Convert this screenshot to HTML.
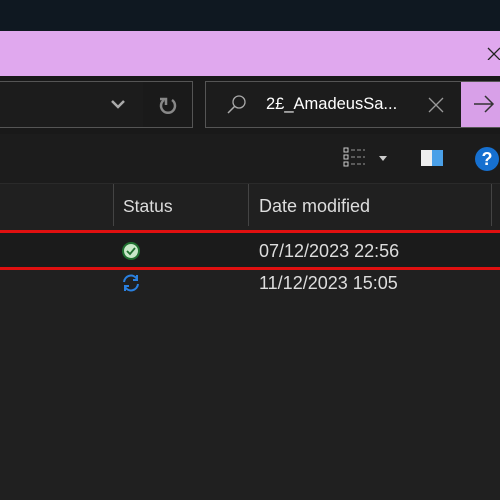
<!DOCTYPE html><html><head><style>
body{margin:0;width:500px;height:500px;background:#202020;position:relative;overflow:hidden;font-family:"Liberation Sans",sans-serif;color:#fff}
div{position:absolute;box-sizing:border-box}
</style></head><body>
<div style="left:0;top:0;width:500px;height:31px;background:#0f1821"></div>
<div style="left:0;top:31px;width:500px;height:45px;background:#e0a8ee"></div>
<svg style="position:absolute;left:486px;top:46px" width="14" height="14"><path d="M2 2L14 14M14 2L2 14" stroke="#222" stroke-width="1.3"/></svg>
<div style="left:0;top:76px;width:500px;height:58px;background:#191919"></div>
<div style="left:-2px;top:81px;width:195px;height:47px;border:1px solid #555;background:#1c1c1c"></div>
<div style="left:143px;top:82px;width:49px;height:45px;background:#1a1a1a"></div>
<svg style="position:absolute;left:110px;top:98px" width="16" height="12"><path d="M2 3L8 9L14 3" stroke="#aaa" stroke-width="2.5" fill="none"/></svg>
<svg style="position:absolute;left:158px;top:96px" width="20" height="20"><path d="M14 4A7 7 0 1 1 6 4" stroke="#888" stroke-width="2.5" fill="none"/><path d="M2 3L8 3L8 9" stroke="#888" stroke-width="2.5" fill="none"/></svg>
<div style="left:205px;top:81px;width:300px;height:47px;border:1px solid #555;background:#1c1c1c"></div>
<svg style="position:absolute;left:226px;top:94px" width="22" height="22"><circle cx="13" cy="8" r="6" stroke="#aaa" stroke-width="1.3" fill="none"/><path d="M9 12L2 19" stroke="#aaa" stroke-width="1.5"/></svg>
<div style="left:266px;top:95px;font-size:16.5px;color:#fff">2£_AmadeusSa...</div>
<svg style="position:absolute;left:428px;top:97px" width="16" height="16"><path d="M1 1L15 15M15 1L1 15" stroke="#999" stroke-width="1.3"/></svg>
<div style="left:461px;top:82px;width:39px;height:45px;background:#d8a0e8"></div>
<svg style="position:absolute;left:473px;top:95px" width="22" height="18"><path d="M1 9L20 9M12 1L20 9L12 17" stroke="#333" stroke-width="1.5" fill="none"/></svg>
<div style="left:0;top:134px;width:500px;height:49px;background:#1c1c1c"></div>
<svg style="position:absolute;left:343px;top:147px" width="45" height="22"><g fill="none" stroke="#ccc"><rect x="1" y="1" width="4" height="4"/><rect x="1" y="8" width="4" height="4"/><rect x="1" y="15" width="4" height="4"/></g><g stroke="#999"><path d="M8 3H22M8 10H22M8 17H22" stroke-dasharray="4 2"/></g><path d="M36 9L44 9L40 14Z" fill="#ccc"/></svg>
<div style="left:421px;top:150px;width:22px;height:16px;background:#eee"></div>
<div style="left:432px;top:150px;width:11px;height:16px;background:#4aa0e8"></div>
<div style="left:475px;top:147px;width:24px;height:24px;border-radius:50%;background:#1670d0;font-weight:bold;font-size:18px;text-align:center;line-height:24px">?</div>
<div style="left:0;top:183px;width:500px;height:1px;background:#2a2a2a"></div>
<div style="left:113px;top:184px;width:1px;height:42px;background:#444"></div>
<div style="left:248px;top:184px;width:1px;height:42px;background:#444"></div>
<div style="left:491px;top:184px;width:1px;height:42px;background:#444"></div>
<div style="left:123px;top:196px;font-size:17.5px;color:#ddd">Status</div>
<div style="left:259px;top:196px;font-size:18px;color:#ddd">Date modified</div>
<div style="left:0;top:230px;width:500px;height:3px;background:#e01010"></div>
<div style="left:0;top:233px;width:500px;height:34px;background:#1b1b1b"></div>
<div style="left:0;top:267px;width:500px;height:3px;background:#e01010"></div>
<svg style="position:absolute;left:121px;top:241px" width="20" height="20"><circle cx="10" cy="10" r="8" fill="#c8e8c8" stroke="#207030" stroke-width="2"/><path d="M6 10L9 13L14 7" stroke="#207030" stroke-width="1.8" fill="none"/></svg>
<div style="left:259px;top:241px;font-size:18px;color:#ddd">07/12/2023 22:56</div>
<svg style="position:absolute;left:121px;top:273px" width="20" height="20"><path d="M3 9A7 7 0 0 1 16 6M17 11A7 7 0 0 1 4 14" stroke="#2a80e0" stroke-width="2" fill="none"/><path d="M16 2V7H12M4 18V13H8" stroke="#2a80e0" stroke-width="2" fill="none"/></svg>
<div style="left:259px;top:273px;font-size:18px;color:#ddd">11/12/2023 15:05</div>
</body></html>
